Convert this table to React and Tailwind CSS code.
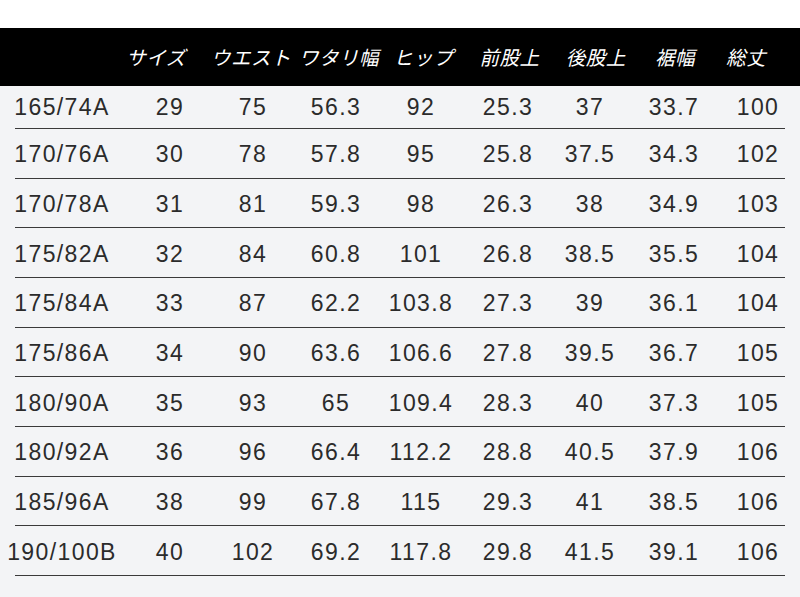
import React from "react";

const headers = ["サイズ", "ウエスト", "ワタリ幅", "ヒップ", "前股上", "後股上", "裾幅", "総丈"];

const rows = [
  ["165/74A", "29", "75", "56.3", "92", "25.3", "37", "33.7", "100"],
  ["170/76A", "30", "78", "57.8", "95", "25.8", "37.5", "34.3", "102"],
  ["170/78A", "31", "81", "59.3", "98", "26.3", "38", "34.9", "103"],
  ["175/82A", "32", "84", "60.8", "101", "26.8", "38.5", "35.5", "104"],
  ["175/84A", "33", "87", "62.2", "103.8", "27.3", "39", "36.1", "104"],
  ["175/86A", "34", "90", "63.6", "106.6", "27.8", "39.5", "36.7", "105"],
  ["180/90A", "35", "93", "65", "109.4", "28.3", "40", "37.3", "105"],
  ["180/92A", "36", "96", "66.4", "112.2", "28.8", "40.5", "37.9", "106"],
  ["185/96A", "38", "99", "67.8", "115", "29.3", "41", "38.5", "106"],
  ["190/100B", "40", "102", "69.2", "117.8", "29.8", "41.5", "39.1", "106"],
];

export default function App() {
  return (
    <div className="w-[800px] h-[597px] bg-white overflow-hidden flex flex-col">
      <div className="h-[28px] bg-white" />
      <div
        className="h-[58px] bg-black grid items-center text-white italic text-[19.5px] tracking-[0.5px] font-['Noto_Sans_CJK_JP']"
        style={{ gridTemplateColumns: "107px 98px 92px 84px 84.5px 88px 84.5px 74px 68px" }}
      >
        <div />
        {headers.map((h) => (
          <div key={h} className="flex justify-center whitespace-nowrap">
            {h}
          </div>
        ))}
      </div>
      <div className="flex-1 bg-[#f3f4f6] text-[#2b2b2b] text-[23px] tracking-[1.4px] font-['Liberation_Sans']">
        {rows.map((r, i) => (
          <div
            key={r[0]}
            className={
              "ml-[15px] mr-[15px] border-b-[1.5px] border-[#3a3a3a] grid items-center " +
              (i === 0 ? "h-[43px]" : "h-[49.67px] pt-[3px]")
            }
            style={{ gridTemplateColumns: "94px 122px 44px 122px 48px 126px 38px 130px 38px" }}
          >
            {r.map((c, j) => (
              <div key={j} className="flex justify-center whitespace-nowrap leading-none">
                {c}
              </div>
            ))}
          </div>
        ))}
      </div>
    </div>
  );
}
